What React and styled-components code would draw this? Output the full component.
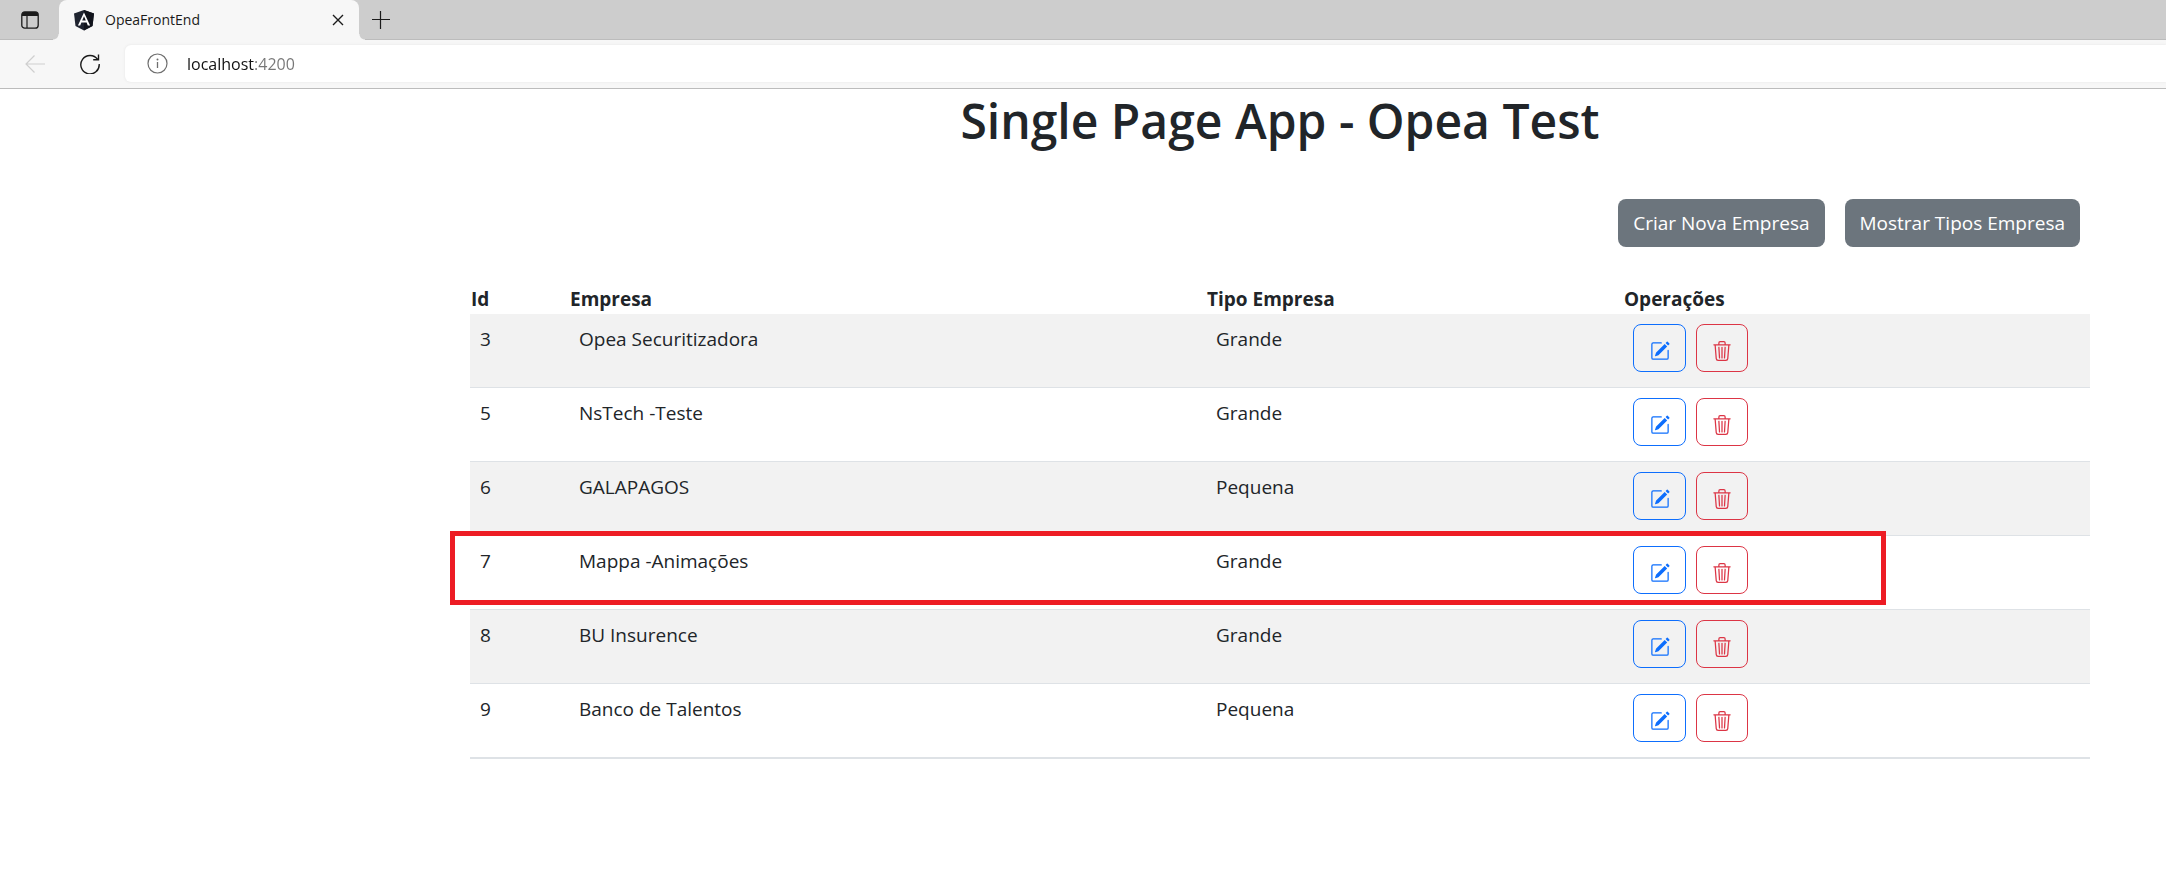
import React from "react";
import styled, { createGlobalStyle, css } from "styled-components";
import { BsPencilSquare, BsTrash3 } from "react-icons/bs";

const GlobalStyle = createGlobalStyle`
  *, *::before, *::after { box-sizing: border-box; }
  body {
    margin: 0;
    background: #fff;
    color: #212529;
    font-family: "Segoe UI", "Open Sans", "Noto Sans", sans-serif;
    font-size: 19px;
    line-height: 30px;
  }
  button, input { font: inherit; }
`;

const TabStrip = styled.div`
  display: flex;
  align-items: stretch;
  height: 40px;
  background: #cdcdcd;
  box-shadow: inset 0 -1px 0 #bcbcbc;
`;

const ChromeButton = styled.button`
  display: flex;
  align-items: center;
  justify-content: center;
  flex: none;
  width: ${(p) => p.$width}px;
  padding: 0;
  border: 0;
  background: none;
  color: #1b1b1b;

  &:disabled { color: #cfcfcf; }
`;

const Tab = styled.div`
  position: relative;
  display: flex;
  align-items: center;
  gap: 10px;
  width: 300px;
  padding: 0 7px 0 14px;
  border-radius: 8px 8px 0 0;
  background: #f7f7f7;
  font-size: 14px;
  line-height: 20px;
  color: #1b1b1b;

  &::before, &::after {
    content: "";
    position: absolute;
    bottom: 0;
    width: 6px;
    height: 6px;
  }
  &::before {
    right: 100%;
    background: radial-gradient(circle at 0 0, #cdcdcd 5px, #f7f7f7 6px);
  }
  &::after {
    left: 100%;
    background: radial-gradient(circle at 100% 0, #cdcdcd 5px, #f7f7f7 6px);
  }
`;

const TabTitle = styled.span`
  flex: 1;
`;

const Toolbar = styled.div`
  display: flex;
  align-items: stretch;
  height: 49px;
  padding: 5px 0 6px 7px;
  border-bottom: 1px solid #bcbcbc;
  background: #f7f7f7;
`;

const AddressBar = styled.label`
  display: flex;
  flex: 1;
  align-items: center;
  gap: 19px;
  margin-left: 8px;
  padding-left: 22px;
  border-radius: 6px 0 0 6px;
  background: #fff;
  box-shadow: 0 0 3px #e4e4e4;
  color: #6e6e6e;
`;

const AddressInput = styled.input`
  flex: 1;
  min-width: 0;
  padding: 0;
  border: 0;
  outline: 0;
  font-size: 16px;
  line-height: 24px;
  color: #111;
  background: linear-gradient(to right, #111 68px, #767676 68px);
  background-clip: text;
  -webkit-text-fill-color: transparent;
`;

const Page = styled.main`
  padding: 0 76px 0 470px;
`;

const Title = styled.h1`
  margin: 0;
  padding-top: 2px;
  font-size: 48px;
  line-height: 60px;
  font-weight: 600;
  text-align: center;
`;

const Actions = styled.div`
  display: flex;
  justify-content: flex-end;
  gap: 20px;
  padding: 48px 10px 37px 0;
`;

const ActionButton = styled.button`
  height: 48px;
  padding: 0 15px;
  border: 0;
  border-radius: 8px;
  background: #6c757d;
  color: #fff;
`;

const Table = styled.table`
  width: 100%;
  table-layout: fixed;
  border-collapse: separate;
  border-spacing: 0;
`;

const Column = styled.col`
  width: ${(p) => (p.$width ? `${p.$width}px` : "auto")};
`;

const HeadCell = styled.th`
  padding: 0 1px;
  text-align: left;
  font-weight: 700;
`;

const Cell = styled.td`
  height: 74px;
  padding: 10px 10px 15px;
  border-bottom: 1px solid #dee2e6;
  vertical-align: top;
`;

const highlighted = css`
  position: relative;

  ${Cell}:first-child::after {
    content: "";
    position: absolute;
    top: -5px;
    right: 204px;
    left: -20px;
    height: 74px;
    border: 5px solid #ed1c24;
    pointer-events: none;
  }
`;

const Row = styled.tr`
  &:nth-child(odd) { background: #f2f2f2; }
  &:last-child ${Cell} { border-bottom-width: 2px; }
  ${(p) => p.$highlighted && highlighted}
`;

const RowButtons = styled.div`
  display: flex;
  gap: 10px;
`;

const IconButton = styled.button`
  display: flex;
  align-items: center;
  justify-content: center;
  width: ${(p) => (p.$danger ? 52 : 53)}px;
  height: 48px;
  padding: 6px 0 0;
  border: 1px solid currentColor;
  border-radius: 8px;
  background: none;
  color: ${(p) => (p.$danger ? "#dc3545" : "#0d6efd")};
`;

const stroke = { fill: "none", stroke: "currentColor" };

const TabMenuIcon = () => (
  <svg width="18" height="18" viewBox="0 0 18 18" aria-hidden="true">
    <rect x="0.8" y="0.8" width="16.4" height="16.4" rx="3" {...stroke} strokeWidth="1.3" />
    <path d="M1 5V3.5A2.5 2.5 0 0 1 3.5 1h11A2.5 2.5 0 0 1 17 3.5V5z" fill="currentColor" />
    <path d="M6 5v12" {...stroke} strokeWidth="1.2" />
  </svg>
);

const AngularIcon = () => (
  <svg width="22" height="22" viewBox="0 0 22 22" aria-hidden="true">
    <path d="M11 1 21 4.5 19.5 17 11 21.5 2.5 17 1 4.5z" fill="#1f2430" />
    <path d="M11 1 21 4.5 19.5 17 11 21.5z" fill="#11141c" />
    <path d="M11 3.5 4.9 16.5h2.3l1.2-3h5.2l1.2 3h2.3zM11 7.3l1.8 4.3H9.2z" fill="#fff" fillRule="evenodd" />
  </svg>
);

const CloseIcon = () => (
  <svg width="12" height="12" viewBox="0 0 12 12" aria-hidden="true">
    <path d="M1 1l10 10M11 1 1 11" {...stroke} strokeWidth="1.4" />
  </svg>
);

const PlusIcon = () => (
  <svg width="18" height="18" viewBox="0 0 18 18" aria-hidden="true">
    <path d="M8.5 0v18M0 8.5h18" {...stroke} strokeWidth="1.2" />
  </svg>
);

const BackIcon = () => (
  <svg width="20" height="18" viewBox="0 0 20 18" aria-hidden="true">
    <path d="M20 9H1M9.5 0.5 1 9l8.5 8.5" {...stroke} strokeWidth="1.2" />
  </svg>
);

const ReloadIcon = () => (
  <svg width="20" height="20" viewBox="0 0 20 20" aria-hidden="true">
    <path d="M17.6 5.5A9.2 9.2 0 1 0 19.2 10M18.5 0.5v5.3h-5.3" {...stroke} strokeWidth="1.4" />
  </svg>
);

const InfoIcon = () => (
  <svg width="21" height="21" viewBox="0 0 21 21" aria-hidden="true">
    <circle cx="10.5" cy="10.5" r="9.5" {...stroke} strokeWidth="1.2" />
    <path d="M10.5 9v6" {...stroke} strokeWidth="1.3" />
    <circle cx="10.5" cy="6.5" r="1" fill="currentColor" />
  </svg>
);

const companies = [
  { id: 3, name: "Opea Securitizadora", type: "Grande" },
  { id: 5, name: "NsTech -Teste", type: "Grande" },
  { id: 6, name: "GALAPAGOS", type: "Pequena" },
  { id: 7, name: "Mappa -Animações", type: "Grande", highlighted: true },
  { id: 8, name: "BU Insurence", type: "Grande" },
  { id: 9, name: "Banco de Talentos", type: "Pequena" },
];

export default function App() {
  return (
    <>
      <GlobalStyle />
      <header>
        <TabStrip>
          <ChromeButton $width={59} aria-label="Tab actions"><TabMenuIcon /></ChromeButton>
          <Tab>
            <AngularIcon />
            <TabTitle>OpeaFrontEnd</TabTitle>
            <ChromeButton $width={28} aria-label="Close tab"><CloseIcon /></ChromeButton>
          </Tab>
          <ChromeButton $width={44} aria-label="New tab"><PlusIcon /></ChromeButton>
        </TabStrip>
        <Toolbar>
          <ChromeButton $width={56} disabled aria-label="Back"><BackIcon /></ChromeButton>
          <ChromeButton $width={54} aria-label="Reload"><ReloadIcon /></ChromeButton>
          <AddressBar>
            <InfoIcon />
            <AddressInput type="text" aria-label="Address" defaultValue="localhost:4200" />
          </AddressBar>
        </Toolbar>
      </header>
      <Page>
        <Title>Single Page App - Opea Test</Title>
        <Actions>
          <ActionButton type="button">Criar Nova Empresa</ActionButton>
          <ActionButton type="button">Mostrar Tipos Empresa</ActionButton>
        </Actions>
        <Table>
          <colgroup>
            <Column $width={99} />
            <Column />
            <Column $width={417} />
            <Column $width={467} />
          </colgroup>
          <thead>
            <tr>
              <HeadCell scope="col">Id</HeadCell>
              <HeadCell scope="col">Empresa</HeadCell>
              <HeadCell scope="col">Tipo Empresa</HeadCell>
              <HeadCell scope="col">Operações</HeadCell>
            </tr>
          </thead>
          <tbody>
            {companies.map((company) => (
              <Row key={company.id} $highlighted={company.highlighted}>
                <Cell>{company.id}</Cell>
                <Cell>{company.name}</Cell>
                <Cell>{company.type}</Cell>
                <Cell>
                  <RowButtons>
                    <IconButton type="button" aria-label={`Editar ${company.name}`}>
                      <BsPencilSquare size={20} />
                    </IconButton>
                    <IconButton type="button" $danger aria-label={`Excluir ${company.name}`}>
                      <BsTrash3 size={20} />
                    </IconButton>
                  </RowButtons>
                </Cell>
              </Row>
            ))}
          </tbody>
        </Table>
      </Page>
    </>
  );
}
